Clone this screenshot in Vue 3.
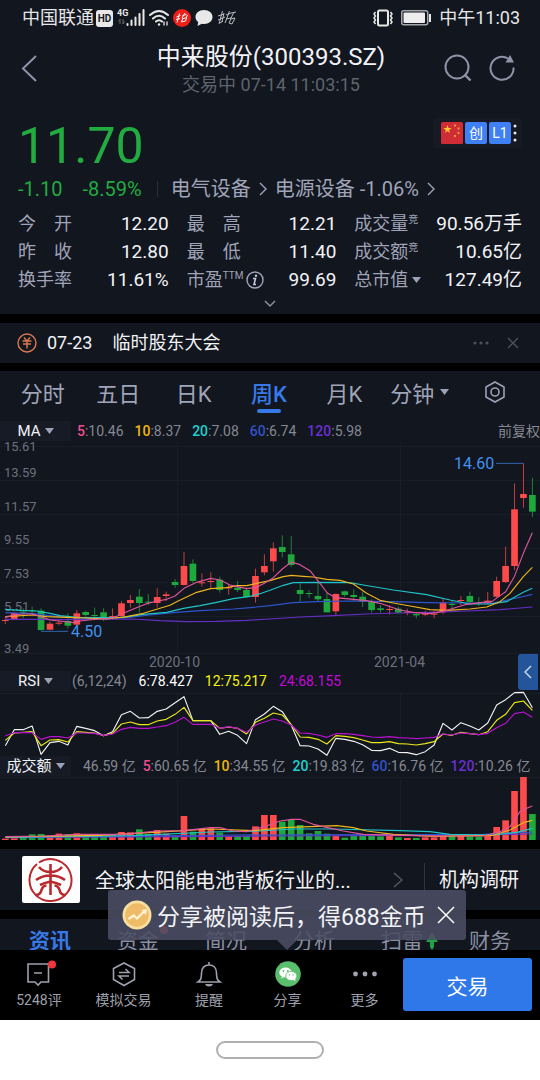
<template>
  <div class="page">
    <div class="status-bar">
      <span class="carrier">中国联通</span>
      <span class="hd">HD</span>
      <svg class="signal" width="28" height="20" viewBox="0 0 28 20">
        <text x="0" y="8" font-size="9" font-weight="700" fill="#e8e8e8">4G</text>
        <path d="M3 11v5M1.500 13.500L3 11.500M6 11v5M7.500 13.500L6 16" stroke="#666a73" stroke-width="1" fill="none" />
        <path d="M10.500 16v1M14.500 12.500v4.500M18.500 9.500v7.500M22.500 6v11M26.500 2v15" stroke="#e8e8e8" stroke-width="2" fill="none" stroke-linecap="round" />
      </svg>
      <svg width="20" height="18" viewBox="0 0 20 18" fill="none" stroke="#e8e8e8" stroke-width="2" stroke-linecap="round">
        <path d="M1 6Q10-2 19 6M4 9.500Q10 4 16 9.500M7 12.500Q10 10 13 12.500" />
        <circle cx="10" cy="15.500" r="1.200" fill="#e8e8e8" stroke="none" />
        <path d="M15 13v3M18 13v3" stroke-width="1.300" />
      </svg>
      <svg width="18" height="18" viewBox="0 0 18 18">
        <circle cx="9" cy="9" r="9" fill="#ee1f19" />
        <path d="M3.500 8l4-1.500M6.500 4.500l-2.500 9M3 10.500l4-1M9.500 6.500l4-1M12 4l-3 5M13 7.500l2-1M9 10l5-1.500M9.500 10l-1 3 4-1 1-3" stroke="#fff" stroke-width="1" fill="none" />
      </svg>
      <svg class="bubble" width="18" height="18" viewBox="0 0 18 18">
        <path d="M9 1c5 0 8.500 3 8.500 7S14 15 9 15c-.8 0-1.500 0-2.200-.2L2.500 17l.7-4C1.500 11.800.5 10 .5 8 .5 4 4 1 9 1z" fill="#e8e8e8" />
      </svg>
      <svg class="bubble" width="20" height="16" viewBox="0 0 20 16" fill="none" stroke="#b9bac0" stroke-width="1">
        <path d="M1 6l6-2M5.500 1L2 14M1 10l7-3M7 3l-2 9M9 5l5-2M12.500 1L8 13M9 9l5-1M14 3l5-1M17 2l-3 6M13 9l5-1-3 6-3-1 2-4M3 13l3-2" />
      </svg>
      <span class="spacer"></span>
      <svg width="22" height="18" viewBox="0 0 22 18" fill="none" stroke="#e8e8e8" stroke-width="1.500">
        <rect x="6" y="1.500" width="10" height="15" rx="1.500" stroke-width="2" />
        <path d="M3.500 3l-1.500 2 1.500 2L2 9l1.500 2L2 13l1.500 2M18.500 3L20 5l-1.500 2L20 9l-1.500 2 1.500 2-1.500 2" />
      </svg>
      <svg class="battery" width="31" height="16" viewBox="0 0 31 16">
        <rect x=".75" y=".75" width="26" height="14" rx="2" fill="none" stroke="#a5a7ab" stroke-width="1.500" />
        <rect x="2.500" y="2.500" width="21.500" height="10.500" rx="1" fill="#eee" />
        <path d="M29 4v8" stroke="#e8e8e8" stroke-width="2" />
      </svg>
      <span class="clock">中午11:03</span>
    </div>

    <header class="header">
      <button class="icon-button" aria-label="返回">
        <svg width="18" height="28" viewBox="0 0 18 28" fill="none" stroke="#8f93a8" stroke-width="2"><path d="M16 2L3 14.500 16 27" /></svg>
      </button>
      <div class="title">
        <h1>中来股份(300393.SZ)</h1>
        <p>交易中 07-14 11:03:15</p>
      </div>
      <div class="header-actions">
        <button class="icon-button" aria-label="搜索">
          <svg width="28" height="28" viewBox="0 0 28 28" fill="none" stroke="#8f93a8" stroke-width="2"><circle cx="13" cy="13" r="11.500" /><path d="M20.500 20.500l6 6" stroke-width="2.400" /></svg>
        </button>
        <button class="icon-button" aria-label="刷新">
          <svg width="28" height="28" viewBox="0 0 28 28" fill="none" stroke="#8f93a8" stroke-width="2"><path d="M20 4.500A11.500 11.500 0 1 0 25.500 13.500" /><path d="M22 1l4 7.500h-8.500z" fill="#8f93a8" stroke="none" /></svg>
        </button>
      </div>
    </header>

    <section class="quote">
      <div class="price-row">
        <span class="price">11.70</span>
        <button class="badges" aria-label="标签">
          <svg width="22" height="22" viewBox="0 0 22 22">
            <rect width="22" height="22" rx="1.500" fill="#cf2c35" />
            <path d="M6.500 3l1 3h3.200L8.100 7.900l1 3.100-2.600-1.900-2.600 1.900 1-3.100L2.300 6h3.200z" fill="#ffc531" />
            <path d="M13 2.500h2v2h-2zM16.500 5.500h2v2h-2zM16.500 10h2v2h-2zM13 13h2v2h-2z" fill="#e59a33" />
          </svg>
          <span class="badge">创</span>
          <span class="badge">L1</span>
          <svg width="4" height="18" viewBox="0 0 4 18" fill="#e8e8ee"><circle cx="2" cy="2" r="1.500" /><circle cx="2" cy="9" r="1.500" /><circle cx="2" cy="16" r="1.500" /></svg>
        </button>
      </div>

      <div class="change-row">
        <span class="down">-1.10</span>
        <span class="down percent">-8.59%</span>
        <a href="#" class="sector first">电气设备 <svg width="8" height="14" viewBox="0 0 8 14"><path d="M1 1l6 6-6 6" /></svg></a>
        <a href="#" class="sector">电源设备 -1.06% <svg width="8" height="14" viewBox="0 0 8 14"><path d="M1 1l6 6-6 6" /></svg></a>
      </div>

      <dl class="stats">
        <div v-for="item in stats" :key="item.label" class="stat">
          <dt>
            {{ item.label }}<sup v-if="item.sup">{{ item.sup }}</sup>
            <svg v-if="item.info" class="info" width="18" height="18" viewBox="0 0 18 18"><circle cx="9" cy="9" r="8" fill="none" stroke="#a0a4b8" stroke-width="1.400" /><path d="M7 7.500h2.500L8 13.500h2" fill="none" stroke="#c5c8d6" stroke-width="1.600" /><circle cx="10" cy="4.800" r="1.200" fill="#c5c8d6" /></svg>
            <svg v-if="item.caret" class="caret" width="9" height="6" viewBox="0 0 9 6"><path d="M0 0h9L4.500 6z" /></svg>
          </dt>
          <dd>{{ item.value }}</dd>
        </div>
      </dl>
      <button class="expand" aria-label="展开">
        <svg width="12" height="8" viewBox="0 0 12 8" fill="none" stroke="#8b8f9f" stroke-width="1.500"><path d="M1 1l5 5 5-5" /></svg>
      </button>
    </section>

    <section class="notice">
      <svg width="20" height="20" viewBox="0 0 20 20" fill="none" stroke="#d9794f" stroke-width="1.400"><circle cx="10" cy="10" r="9" /><path d="M7 4.500l3 3.500 3-3.500M5.500 8h9M6 11h8M10 8v7.500" /></svg>
      <span>07-23</span>
      <span class="notice-text">临时股东大会</span>
      <button class="icon-button" aria-label="更多公告">
        <svg width="16" height="4" viewBox="0 0 16 4" fill="#4d505a"><circle cx="2" cy="2" r="1.600" /><circle cx="8" cy="2" r="1.600" /><circle cx="14" cy="2" r="1.600" /></svg>
      </button>
      <button class="icon-button" aria-label="关闭公告">
        <svg width="12" height="12" viewBox="0 0 12 12" stroke="#4d505a" stroke-width="1.400"><path d="M1 1l10 10M11 1L1 11" /></svg>
      </button>
    </section>

    <section class="chart-panel">
      <nav class="periods">
        <button v-for="p in periods" :key="p" :class="{ active: p === activePeriod }" @click="activePeriod = p">
          {{ p }}<svg v-if="p === '分钟'" class="caret" width="9" height="6" viewBox="0 0 9 6"><path d="M0 0h9L4.500 6z" /></svg>
        </button>
        <button aria-label="设置">
          <svg width="20" height="22" viewBox="0 0 20 22" fill="none" stroke="#9da1b5" stroke-width="1.600"><path d="M10 1l9 5v10l-9 5-9-5V6z" /><circle cx="10" cy="11" r="4" /></svg>
        </button>
      </nav>

      <div class="indicator">
        <label class="picker">
          <select aria-label="主图指标"><option>MA</option></select>
          <svg class="caret" width="9" height="6" viewBox="0 0 9 6"><path d="M0 0h9L4.500 6z" /></svg>
        </label>
        <div class="values ma-values">
          <span v-for="m in maValues" :key="m.key"><b :class="'c' + m.key">{{ m.key }}</b>:{{ m.value }}</span>
        </div>
        <span class="adjust">前复权</span>
      </div>

      <svg class="chart" viewBox="0 0 540 228">
        <g class="grid">
          <path d="M0 4.500H540M0 38.500H540M0 72.500H540M0 106.500H540M0 140.500H540M0 174.500H540M0 211.500H540M177.500 0V211M400.500 0V211" />
        </g>
        <text v-for="t in priceTicks" :key="t.label" class="tick" x="4" :y="t.y">{{ t.label }}</text>
        <g transform="translate(0 -22) scale(0.33333)">
          <g v-for="(c, i) in candles" :key="i" :class="c[0] === 'r' ? 'up-bar' : 'down-bar'">
            <rect :x="px(i) - 1.500" :y="c[1]" width="3" :height="c[4] - c[1]" opacity="0.75" />
            <rect :x="px(i) - 10" :y="c[2]" width="20" :height="c[3] - c[2]" />
          </g>
          <polyline v-for="l in maLines" :key="l.name" :class="['line', l.name]" :points="l.points" />
          <path d="M123 634H204M1488 130H1570" class="marker" />
        </g>
        <text class="extreme" x="71" y="195">4.50</text>
        <text class="extreme" x="454" y="27">14.60</text>
        <text class="date" x="149" y="225">2020-10</text>
        <text class="date" x="374" y="225">2021-04</text>
      </svg>

      <div class="indicator">
        <label class="picker">
          <select aria-label="副图指标"><option>RSI</option></select>
          <svg class="caret" width="9" height="6" viewBox="0 0 9 6"><path d="M0 0h9L4.500 6z" /></svg>
        </label>
        <div class="values rsi-values">
          <span>(6,12,24)</span>
          <span class="rsi6">6:78.427</span>
          <span class="rsi12">12:75.217</span>
          <span class="rsi24">24:68.155</span>
        </div>
      </div>

      <svg class="chart" viewBox="0 0 540 63">
        <path class="grid" d="M0 1.500H540M177.500 0V63M400.500 0V63" />
        <g transform="translate(0 -27) scale(0.33333)">
          <polyline v-for="r in rsiLines" :key="r.name" :class="['line', r.name]" :points="series(r.ys)" />
        </g>
      </svg>

      <div class="indicator">
        <label class="picker">
          <select aria-label="成交指标"><option>成交额</option></select>
          <svg class="caret" width="9" height="6" viewBox="0 0 9 6"><path d="M0 0h9L4.500 6z" /></svg>
        </label>
        <div class="values volume-values">
          <span>46.59 亿</span>
          <span v-for="m in volumeValues" :key="m.key"><b :class="'c' + m.key">{{ m.key }}</b>:{{ m.value }} 亿</span>
        </div>
      </div>

      <svg class="chart" viewBox="0 0 540 63">
        <path class="grid" d="M0 .5H540M177.500 0V63M400.500 0V63" />
        <g transform="translate(0 -112) scale(0.33333)">
          <rect v-for="(top, i) in volumes" :key="i" :class="candles[i][0] === 'r' ? 'up-bar' : 'down-bar'" :x="px(i) - 10" :y="top" width="20" :height="525 - top" />
          <polyline v-for="l in volumeLines" :key="l.name" :class="['line', l.name]" :points="l.points" />
        </g>
      </svg>

      <button class="side-handle" aria-label="展开侧栏">
        <svg width="8" height="14" viewBox="0 0 8 14" fill="none" stroke="#c8d8f0" stroke-width="1.500"><path d="M7 1L1 7l6 6" /></svg>
      </button>
    </section>

    <section class="company">
      <svg class="logo" width="58" height="47" viewBox="0 0 58 47" fill="none" stroke="#b9292e" stroke-width="2.600">
        <rect width="58" height="47" rx="2" fill="#fff" stroke="none" />
        <path d="M17 6.500Q28-.5 40 6.500A21 21 0 1 1 15 8" stroke-width="2" />
        <path d="M28.500 8v31M17 11q4 5 11.500 5T40 11M14 24q6-4.500 14.500-4.500T43 24M18 29q4-2 10.500-3.500Q35 27 39 29" />
        <path d="M13.500 39q5 0 6-5 1-4 5-4.500M43.500 39q-5 0-6-5-1-4-5-4.500" />
      </svg>
      <a href="#" class="company-text">全球太阳能电池背板行业的...</a>
      <svg width="10" height="16" viewBox="0 0 10 16" fill="none" stroke="#555966" stroke-width="1.500"><path d="M1 1l8 7-8 7" /></svg>
      <a href="#" class="research">机构调研</a>
    </section>

    <nav class="info-tabs">
      <button v-for="t in infoTabs" :key="t" :class="{ active: t === '资讯' }">
        {{ t }}<i v-if="t === '资金'" class="tab-dot"></i>
        <svg v-if="t === '扫雷'" class="tab-arrow" width="12" height="18" viewBox="0 0 12 18"><path d="M6 0l6 10H8v5l-2 3-2-3v-5H0z" fill="#21a346" /></svg>
      </button>
    </nav>

    <footer class="dock">
      <div class="toast">
        <svg width="30" height="30" viewBox="0 0 30 30"><circle cx="15" cy="15" r="14.500" fill="#f8e0a0" /><circle cx="15" cy="15" r="11.800" fill="#eebb68" /><path d="M6 18l6-4 3 3 6-6-2-1 6-1-1 6-2-2-7 7-3-3-5 3z" fill="#fff3d8" /></svg>
        <span>分享被阅读后，得688金币</span>
        <button class="icon-button" aria-label="关闭提示">
          <svg width="18" height="18" viewBox="0 0 18 18" stroke="#fff" stroke-width="1.500"><path d="M1 1l16 16M17 1L1 17" /></svg>
        </button>
      </div>

      <button class="dock-item">
        <svg width="34" height="28" viewBox="0 0 34 28" fill="none" stroke="#9da1ad" stroke-width="1.600"><path d="M6 4h20.500v18H19l-3 3-3-3H6zM12 13h8" /><circle cx="30" cy="4.500" r="4" fill="#f0383c" stroke="none" /></svg>
        5248评
      </button>
      <button class="dock-item">
        <svg width="28" height="28" viewBox="0 0 28 28" fill="none" stroke="#9da1ad" stroke-width="1.600"><path d="M14 3l10.500 5.500v11L14 25.500 3.500 19.500v-11zM9 12.500h10l-3.500-3.500M19 16H9l3.500 3.500" /></svg>
        模拟交易
      </button>
      <button class="dock-item">
        <svg width="28" height="28" viewBox="0 0 28 28" fill="none" stroke="#9da1ad" stroke-width="1.600"><path d="M14 2v3M3 22h22c-3-2-3.500-4-3.500-9 0-5-3-8-7.500-8s-7.500 3-7.500 8c0 5-.5 7-3.500 9z" /><path d="M10 24h8q-1 2.500-4 2.500T10 24z" fill="#9da1ad" stroke="none" /></svg>
        提醒
      </button>
      <button class="dock-item">
        <svg width="28" height="28" viewBox="0 0 28 28"><circle cx="14" cy="14" r="12.800" fill="#5abf6d" /><ellipse cx="11.500" cy="12.500" rx="6.200" ry="5" fill="#fff" /><path d="M8 16l-.8 2.500 3-1.500z" fill="#fff" /><ellipse cx="17.300" cy="16" rx="5.600" ry="4.600" fill="#fff" stroke="#5abf6d" stroke-width=".8" /><path d="M19 19.500l2.500 1.800-.4-2.500z" fill="#fff" /><g fill="#5abf6d"><circle cx="9.500" cy="11" r=".9" /><circle cx="13.800" cy="11" r=".9" /><circle cx="15.500" cy="15" r=".7" /><circle cx="19" cy="15" r=".7" /></g></svg>
        分享
      </button>
      <button class="dock-item">
        <svg width="28" height="28" viewBox="0 0 28 28" fill="#a3a6b2"><circle cx="4.500" cy="14" r="2.400" /><circle cx="14" cy="14" r="2.400" /><circle cx="23.500" cy="14" r="2.400" /></svg>
        更多
      </button>
      <button class="trade">交易</button>
    </footer>

    <div class="system-nav"><span class="home-pill"></span></div>
  </div>
</template>

<script setup>
import { ref } from 'vue';

const activePeriod = ref('周K');
const periods = ['分时', '五日', '日K', '周K', '月K', '分钟'];
const infoTabs = ['资讯', '资金', '简况', '分析', '扫雷', '财务'];

const stats = [
  { label: '今　开', value: '12.20' },
  { label: '最　高', value: '12.21' },
  { label: '成交量', value: '90.56万手', sup: '竞' },
  { label: '昨　收', value: '12.80' },
  { label: '最　低', value: '11.40' },
  { label: '成交额', value: '10.65亿', sup: '竞' },
  { label: '换手率', value: '11.61%' },
  { label: '市盈', value: '99.69', sup: 'TTM', info: true },
  { label: '总市值', value: '127.49亿', caret: true },
];

const maValues = [
  { key: '5', value: '10.46' },
  { key: '10', value: '8.37' },
  { key: '20', value: '7.08' },
  { key: '60', value: '6.74' },
  { key: '120', value: '5.98' },
];

const volumeValues = [
  { key: '5', value: '60.65' },
  { key: '10', value: '34.55' },
  { key: '20', value: '19.83' },
  { key: '60', value: '16.76' },
  { key: '120', value: '10.26' },
];

const priceTicks = [
  { label: '15.61', y: 9 },
  { label: '13.59', y: 35 },
  { label: '11.57', y: 69 },
  { label: '9.55', y: 102 },
  { label: '7.53', y: 136 },
  { label: '5.51', y: 169 },
  { label: '3.49', y: 211 },
];

// x of the i-th week, plots are drawn on a 1620 wide canvas
const px = (i) => 16 + i * 26.8;
const series = (ys) => ys.map((y, i) => `${px(i).toFixed(1)},${y}`).join(' ');

// colour, high, body top, body bottom, low
const candles = [
  ['r', 592, 600, 603, 612], ['r', 575, 579, 597, 600], ['g', 565, 575, 578, 595], ['g', 560, 571, 574, 580],
  ['g', 565, 572, 630, 632], ['r', 605, 611, 629, 631], ['r', 600, 608, 611, 616], ['g', 580, 603, 617, 625],
  ['r', 570, 580, 614, 616], ['g', 572, 576, 585, 590], ['g', 563, 585, 588, 593], ['g', 565, 577, 592, 603],
  ['r', 565, 588, 591, 600], ['r', 543, 550, 588, 590], ['r', 525, 540, 549, 563], ['g', 507, 530, 549, 578],
  ['g', 522, 545, 548, 555], ['r', 505, 531, 549, 563], ['r', 515, 523, 528, 543], ['g', 477, 486, 495, 503],
  ['r', 396, 438, 495, 497], ['g', 418, 431, 483, 489], ['r', 460, 487, 490, 500], ['r', 457, 483, 486, 507],
  ['g', 470, 479, 510, 518], ['r', 495, 502, 505, 524], ['g', 483, 503, 510, 516], ['g', 503, 510, 531, 533],
  ['r', 446, 468, 531, 548], ['r', 403, 438, 457, 466], ['r', 367, 385, 424, 455], ['g', 346, 381, 396, 412],
  ['g', 348, 403, 435, 441], ['g', 491, 510, 522, 545], ['g', 511, 519, 522, 533], ['g', 484, 528, 538, 543],
  ['g', 518, 537, 577, 577], ['r', 520, 522, 574, 585], ['g', 512, 514, 525, 531], ['g', 508, 525, 531, 543],
  ['g', 515, 530, 546, 561], ['g', 538, 545, 570, 578], ['g', 555, 565, 570, 578], ['r', 556, 567, 570, 583],
  ['g', 560, 566, 578, 580], ['r', 566, 576, 579, 586], ['g', 577, 582, 586, 595], ['r', 572, 581, 584, 588],
  ['r', 572, 581, 584, 595], ['r', 535, 548, 577, 583], ['g', 540, 552, 555, 570], ['r', 528, 540, 543, 555],
  ['g', 515, 528, 546, 549], ['g', 532, 548, 551, 558], ['r', 516, 542, 550, 553], ['r', 470, 483, 530, 533],
  ['r', 380, 438, 486, 489], ['r', 190, 268, 438, 450], ['r', 130, 222, 234, 263], ['g', 173, 225, 275, 291],
];

const maLines = [
  { name: 'l120', points: '16,598 100,598 200,599 400,597 480,602 560,605 650,604 740,601 810,597 900,591 1000,587 1100,582 1200,579 1290,577 1400,573 1500,569 1597,561' },
  { name: 'l60', points: '16,578 100,581 140,586 200,592 300,596 380,593 450,585 520,578 600,572 700,567 760,562 810,557 880,548 950,545 1050,543 1180,545 1280,548 1400,549 1480,549 1550,534 1597,523' },
  { name: 'l20', points: '16,568 60,571 110,573 150,580 180,587 230,592 300,593 370,592 430,583 500,577 550,565 600,557 650,547 700,536 750,529 780,521 810,511 850,496 880,488 960,487 1050,488 1090,495 1180,510 1280,524 1350,540 1410,552 1470,552 1520,545 1570,517 1597,505' },
  { name: 'l10', points: '16,590 97,585 140,590 200,592 260,594 320,597 380,590 430,580 480,565 510,556 530,545 552,535 590,517 632,506 680,503 712,497 740,497 780,488 810,482 850,470 874,466 910,469 940,471 980,478 1020,481 1060,492 1100,520 1140,541 1180,549 1230,558 1290,569 1340,571 1410,567 1460,561 1500,545 1530,520 1570,470 1597,442' },
  { name: 'l5', points: '16,592 43,585 70,582 97,582 123,590 150,600 177,603 204,606 220,608 240,603 265,600 300,597 340,594 370,580 400,567 440,551 472,543 500,538 525,528 552,505 590,487 632,475 660,480 690,495 712,500 739,506 766,503 793,490 820,473 847,447 874,426 900,434 930,452 960,490 982,519 1007,533 1060,538 1100,542 1140,550 1175,562 1200,570 1240,577 1285,581 1310,578 1340,571 1370,562 1400,553 1440,548 1475,545 1500,527 1517,515 1543,470 1570,400 1597,338' },
];

const rsiLines = [
  { name: 'rsi6-line', ys: [242, 194, 194, 183, 268, 233, 229, 240, 184, 190, 197, 212, 200, 149, 139, 159, 158, 139, 132, 113, 95, 167, 167, 167, 208, 199, 211, 236, 164, 147, 124, 140, 180, 242, 243, 252, 271, 220, 223, 229, 239, 256, 257, 250, 262, 263, 269, 260, 240, 175, 195, 173, 183, 195, 174, 120, 104, 83, 82, 128] },
  { name: 'rsi12-line', ys: [226, 204, 202, 200, 242, 225, 224, 231, 200, 202, 204, 212, 205, 177, 171, 179, 179, 168, 163, 148, 127, 167, 167, 167, 190, 186, 190, 207, 172, 160, 144, 150, 178, 216, 217, 223, 237, 212, 214, 218, 225, 233, 233, 230, 236, 237, 240, 236, 230, 207, 211, 202, 206, 209, 200, 166, 148, 113, 108, 136] },
  { name: 'rsi24-line', ys: [212, 203, 203, 203, 223, 215, 215, 219, 204, 204, 205, 211, 207, 193, 187, 190, 190, 186, 182, 172, 157, 178, 178, 178, 190, 185, 190, 202, 180, 171, 162, 168, 180, 204, 205, 210, 217, 206, 206, 208, 212, 216, 217, 215, 218, 219, 221, 219, 217, 207, 210, 204, 206, 209, 205, 188, 175, 146, 141, 157] },
];

// bar tops, the baseline is at 525
const volumes = [
  521, 520, 516, 508, 507, 514, 506, 508, 505, 513, 514, 514, 512, 501, 502, 493, 507, 495, 506, 515,
  453, 500, 493, 490, 503, 513, 513, 513, 484, 450, 450, 470, 465, 480, 505, 498, 506, 512, 518, 512,
  512, 512, 514, 512, 517, 519, 519, 517, 517, 513, 513, 513, 514, 515, 511, 486, 466, 378, 336, 447,
];

const volumeLines = [
  { name: 'l120', points: '16,518 800,513 1300,511 1597,507' },
  { name: 'l60', points: '16,516 400,513 700,510 1100,509 1450,508 1597,501' },
  { name: 'l20', points: '16,517 400,512 632,501 780,498 880,492 1000,492 1200,497 1290,500 1350,508 1480,510 1550,502 1597,490' },
  { name: 'l10', points: '16,516 300,511 500,500 632,492 760,497 850,488 1010,482 1060,488 1100,498 1180,508 1300,514 1480,511 1530,495 1570,473 1597,466' },
  { name: 'l5', points: '16,515 130,513 230,508 370,508 472,498 550,497 632,488 660,488 700,498 740,500 793,485 840,468 874,463 900,463 940,478 980,487 1030,498 1090,508 1200,511 1300,513 1450,513 1500,500 1530,485 1560,440 1580,430 1597,423' },
];
</script>

<style>
body {
  margin: 0;
  background: #fff;
}
</style>

<style scoped>
.page {
  background: #000;
  color: #f2f3f7;
  font-family: Roboto, "Noto Sans CJK SC", sans-serif;
  font-size: 18px;
  overflow: hidden;
}

svg {
  flex: none;
}

button {
  background: none;
  border: none;
  padding: 0;
  margin: 0;
  color: inherit;
  font: inherit;
  cursor: pointer;
}

a {
  color: inherit;
  text-decoration: none;
}

.icon-button {
  display: flex;
  align-items: center;
}

.caret {
  fill: #9da1b5;
}

/* status bar */
.status-bar {
  display: flex;
  align-items: center;
  gap: 4px;
  height: 36px;
  padding: 0 20px 0 22px;
  background: #12161f;
  color: #e6e6e8;
  line-height: 36px;
}

.hd {
  width: 17px;
  margin-left: -2px;
  border-radius: 3px;
  background: #e8e8e8;
  color: #12161f;
  font-size: 10px;
  font-weight: 700;
  line-height: 17px;
  text-align: center;
}

.spacer {
  flex: 1;
}

.battery {
  margin: 0 3px;
}

/* header */
.header {
  display: grid;
  grid-template-columns: 80px 1fr 74px;
  align-items: center;
  box-sizing: border-box;
  height: 68px;
  padding: 0 24px 4px 20px;
  background: #12161f;
}

.title {
  text-align: center;
}

.title h1 {
  margin: 0;
  font-size: 24px;
  font-weight: 400;
  line-height: 34px;
}

.title p {
  margin: 0;
  color: #5f636d;
  font-size: 18px;
  line-height: 22px;
}

.header-actions {
  display: flex;
  justify-content: flex-end;
  gap: 16px;
}

/* quote */
.quote {
  padding: 14px 18px 0;
  background: #12161f;
}

.price-row {
  display: flex;
  justify-content: space-between;
  height: 56px;
}

.price {
  color: #21ab40;
  font-size: 50px;
  line-height: 56px;
}

.badges {
  display: flex;
  align-items: center;
  gap: 2px;
  height: 30px;
  padding: 0 5px 0 8px;
  border-radius: 4px;
  background: #171a22;
}

.badge {
  width: 22px;
  border-radius: 2px;
  background: #3f80f5;
  color: #fff;
  font-size: 14px;
  line-height: 22px;
}

.change-row {
  display: flex;
  align-items: center;
  height: 30px;
  color: #a0a4b8;
  font-size: 20px;
  line-height: 30px;
}

.down {
  color: #21ab40;
}

.percent {
  margin-left: 20px;
}

.sector {
  margin-left: 8px;
  white-space: nowrap;
}

.sector.first {
  margin-left: 15px;
  padding-left: 14px;
  background: linear-gradient(#2a2e38, #2a2e38) left center / 1px 16px no-repeat;
}

.sector svg {
  margin-left: 3px;
  fill: none;
  stroke: #a0a4b8;
  stroke-width: 1.4;
}

.stats {
  display: grid;
  grid-template-columns: 151fr 150fr 168fr;
  column-gap: 18px;
  margin: 6px 0 0;
}

.stat {
  display: flex;
  justify-content: space-between;
  height: 28px;
  line-height: 28px;
}

.stat dt {
  display: flex;
  align-items: center;
  color: #a0a4b8;
  font-size: 18px;
  white-space: nowrap;
}

.stat dd {
  margin: 0;
  font-size: 19px;
  white-space: nowrap;
}

.stat sup {
  align-self: flex-start;
  font-size: 10px;
  line-height: 20px;
}

.info {
  margin-left: 3px;
}

.stat .caret {
  margin-left: 4px;
}

.expand {
  display: flex;
  align-items: center;
  justify-content: center;
  width: 100%;
  height: 20px;
}

/* notice */
.notice {
  display: flex;
  align-items: center;
  height: 40px;
  margin: 9px 0 8px;
  padding: 0 21px 0 17px;
  background: #12161f;
  line-height: 40px;
}

.notice span {
  margin-left: 10px;
}

.notice .notice-text {
  flex: 1;
  margin-left: 20px;
}

.notice .icon-button {
  margin-left: 18px;
}

/* charts */
.chart-panel {
  position: relative;
  background: #12161f;
}

.periods {
  display: grid;
  grid-template-columns: repeat(7, 1fr);
  height: 49px;
  padding: 0 7px 0 5px;
  color: #a0a4b8;
  font-size: 22px;
}

.periods button {
  position: relative;
  display: flex;
  align-items: center;
  justify-content: center;
  gap: 6px;
  padding-bottom: 7px;
}

.periods .active {
  color: #3879e8;
  font-weight: 500;
}

.periods .active::after {
  content: "";
  position: absolute;
  left: 50%;
  bottom: 7px;
  width: 24px;
  height: 4px;
  margin-left: -12px;
  border-radius: 2px;
  background: #3879e8;
}

.indicator {
  display: flex;
  align-items: center;
  height: 22px;
  color: #858892;
  font-size: 14px;
  line-height: 22px;
  white-space: nowrap;
}

.picker {
  display: flex;
  align-items: center;
  justify-content: center;
  gap: 3px;
  width: 71px;
  height: 20px;
  background: #171b26;
}

.picker select {
  appearance: none;
  padding: 0;
  border: none;
  background: none;
  color: #f2f3f7;
  font-family: inherit;
  font-size: 15px;
}

.values {
  display: flex;
}

.values b {
  font-weight: 500;
}

.ma-values {
  gap: 11px;
  margin-left: 6px;
}

.rsi-values {
  gap: 12px;
  margin-left: 1px;
}

.volume-values {
  gap: 7px;
  margin-left: 12px;
}

.adjust {
  margin-left: auto;
}

.c5 { color: #ec4d8f; }
.c10 { color: #efb70c; }
.c20 { color: #1ed1cf; }
.c60 { color: #3350c8; }
.c120 { color: #6a2fd0; }
.rsi6 { color: #fff; }
.rsi12 { color: #f5f50a; }
.rsi24 { color: #c30ad8; }

.chart {
  display: block;
  width: 100%;
  height: auto;
  overflow: visible;
}

.grid {
  fill: none;
  stroke: #191d26;
  stroke-width: 1;
}

.tick {
  fill: #6c707c;
  font-size: 13px;
}

.date {
  fill: #6c707c;
  font-size: 14px;
}

.extreme {
  fill: #4291ee;
  font-size: 16px;
}

.marker {
  stroke: #2f68ad;
  stroke-width: 3;
}

.up-bar { fill: #ff4a4c; }
.down-bar { fill: #1fa83c; }

.line {
  fill: none;
  stroke-width: 3.4;
  stroke-linejoin: round;
}

.l5 { stroke: #e0559a; }
.l10 { stroke: #eeb41c; }
.l20 { stroke: #1fc4c8; }
.l60 { stroke: #2f55cc; }
.l120 { stroke: #6430c4; }
.rsi6-line { stroke: #f2f2f2; }
.rsi12-line { stroke: #e8e81a; }
.rsi24-line { stroke: #bb12d2; }

.side-handle {
  position: absolute;
  right: 2px;
  top: 283px;
  display: flex;
  align-items: center;
  justify-content: center;
  width: 20px;
  height: 36px;
  border-radius: 3px 0 0 3px;
  background: #24549a;
}

/* company */
.company {
  display: flex;
  align-items: center;
  height: 61px;
  margin: 9px 0;
  padding: 0 21px 0 22px;
  background: #12161f;
  font-size: 20px;
}

.company-text {
  flex: 1;
  margin-left: 15px;
}

.research {
  margin-left: 21px;
  padding-left: 14px;
  border-left: 1px solid #2f333d;
  line-height: 34px;
}

/* info tabs, the lower part runs under the dock */
.info-tabs {
  display: grid;
  grid-template-columns: repeat(6, 1fr);
  height: 31px;
  padding: 0 6px;
  overflow: hidden;
  background: #12161f;
  color: #8b8fa2;
  font-size: 21px;
}

.info-tabs button {
  position: relative;
  height: 40px;
}

.info-tabs .active {
  color: #3879e8;
  font-weight: 700;
}

.tab-dot {
  position: absolute;
  top: 7px;
  right: 14px;
  width: 8px;
  height: 8px;
  border-radius: 50%;
  background: #f0383c;
}

.tab-arrow {
  position: absolute;
  top: 13px;
  right: 8px;
}

/* dock */
.dock {
  position: relative;
  display: grid;
  grid-template-columns: 78fr 91fr 80fr 77fr 77fr 129fr;
  height: 70px;
  padding-right: 8px;
  box-sizing: border-box;
}

.dock-item {
  display: flex;
  flex-direction: column;
  align-items: center;
  gap: 2px;
  padding-top: 10px;
  color: #9da1ad;
  font-size: 14px;
  line-height: 20px;
}

.trade {
  align-self: start;
  height: 53px;
  margin-top: 8px;
  border-radius: 3px;
  background: #2f78ea;
  color: #fff;
  font-size: 21px;
}

.toast {
  position: absolute;
  left: 20%;
  bottom: calc(100% + 10px);
  display: flex;
  align-items: center;
  height: 50px;
  padding: 0 11px 0 14px;
  border-radius: 3px;
  background: rgba(75, 78, 100, 0.88);
  font-size: 23px;
  white-space: nowrap;
}

.toast::after {
  content: "";
  position: absolute;
  top: 100%;
  left: 50%;
  margin-left: -10px;
  border: 10px solid transparent;
  border-top-color: rgba(75, 78, 100, 0.88);
  border-bottom: none;
}

.toast span {
  margin: 0 11px 0 5px;
}

/* system navigation */
.system-nav {
  display: flex;
  align-items: center;
  justify-content: center;
  height: 60px;
  background: #fff;
}

.home-pill {
  width: 104px;
  height: 14px;
  border: 2px solid #b0b0b0;
  border-radius: 9px;
}
</style>
